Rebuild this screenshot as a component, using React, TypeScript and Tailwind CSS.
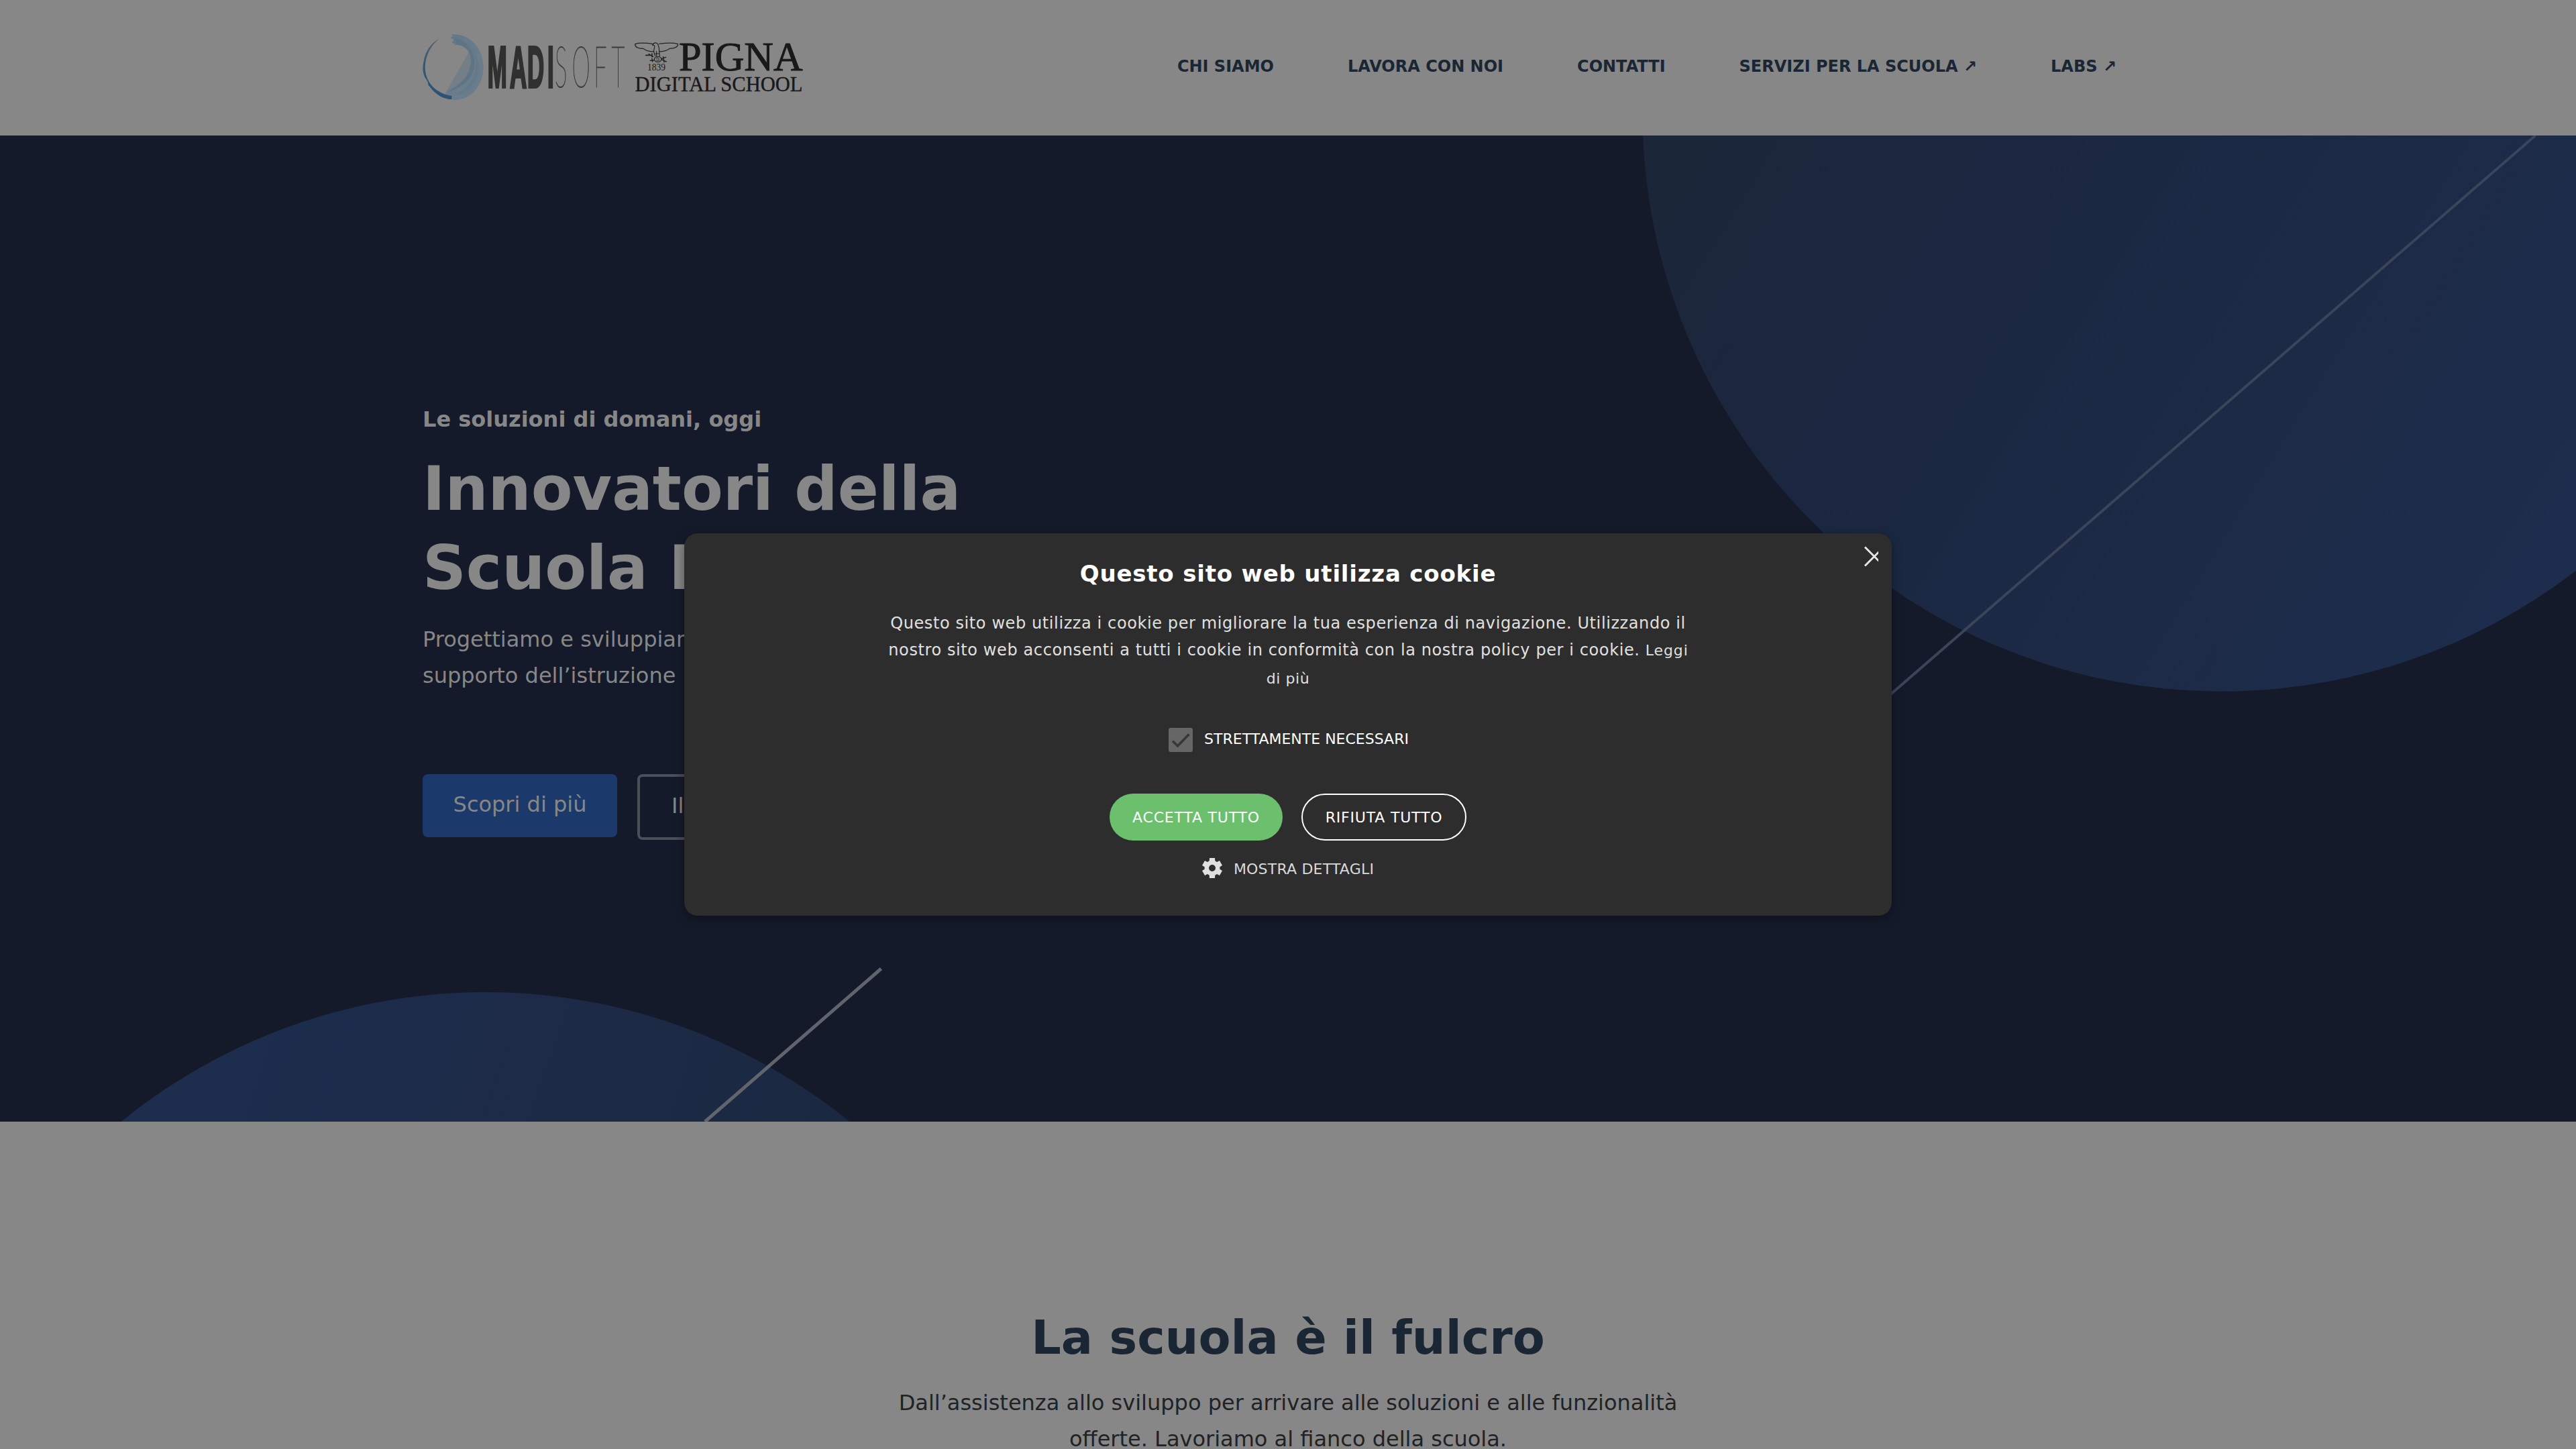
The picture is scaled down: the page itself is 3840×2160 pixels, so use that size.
const NAV = ["CHI SIAMO", "LAVORA CON NOI", "CONTATTI", "SERVIZI PER LA SCUOLA ↗", "LABS ↗"];

function MadisoftMark() {
  return (
    <svg viewBox="0 0 324 390" className="h-[130px] w-[108px] shrink-0">
      <defs>
        <linearGradient id="crescent" x1="0" y1="0" x2="0" y2="1">
          <stop offset="0" stopColor="#566068" />
          <stop offset="0.5" stopColor="#315776" />
          <stop offset="1" stopColor="#2a5375" />
        </linearGradient>
        <linearGradient id="swirl" x1="0" y1="0" x2="1" y2="1">
          <stop offset="0" stopColor="#5e778a" />
          <stop offset="0.6" stopColor="#6c7d8b" />
          <stop offset="1" stopColor="#687c8d" />
        </linearGradient>
      </defs>
      <path d="M158 34 C245 28 302 100 302 180 C302 262 248 328 168 328 L132 300 L240 108 C226 88 200 76 178 82 L160 68 L170 60 L154 48 L166 42 Z" fill="url(#swirl)" />
      <path d="M240 108 L132 296 C150 280 170 270 190 255 C240 220 262 160 240 108 Z" fill="#737e87" />
      <path d="M175 52 C232 60 268 112 262 172 C256 236 205 272 142 292 C200 258 246 214 246 152 C246 110 220 84 182 80 Z" fill="#5f7586" />
      <path d="M230 70 C276 110 290 170 274 220 C256 276 212 302 168 306 C226 284 262 238 268 180 C272 134 254 96 230 70 Z" fill="#65798a" />
      <path d="M105 52 C66 84 42 130 41 180 C41 242 82 296 160 309 L160 325 C118 324 84 298 62 268 L56 262 L52 244 L40 226 C32 206 28 188 34 160 C40 112 66 74 105 52 Z" fill="url(#crescent)" />
    </svg>
  );
}

function MadisoftWord() {
  return (
    <svg viewBox="728 40 210 130" className="h-[130px] w-[210px] shrink-0 overflow-visible">
      <g transform="translate(728 129.6) scale(0.4 1)">
        <text x="-3 80 145 220" fontFamily="Liberation Sans" fontWeight="700" fontSize="87" fill="#303031" stroke="#303031" strokeWidth="4">
          MADI
        </text>
      </g>
      <g transform="translate(827 129.6) scale(0.4 1)">
        <text x="0 64 145 211" fontFamily="Lato" fontWeight="100" fontSize="87" fill="#3a3b3c" stroke="#3a3b3c" strokeWidth="1.1">
          SOFT
        </text>
      </g>
    </svg>
  );
}

function PignaLogo() {
  return (
    <svg viewBox="938 40 262 130" className="h-[130px] w-[262px] shrink-0 overflow-visible">
      <g transform="translate(930 50) scale(0.3333)" fill="none" stroke="#242425" strokeWidth="3.6" strokeLinejoin="round" strokeLinecap="round">
        <path d="M132 47 C100 42 65 42 50 47 C50 58 60 67 86 67 C98 76 115 82 132 80" />
        <path d="M158 46 C190 42 226 42 242 47 C242 58 230 67 206 67 C192 76 176 82 160 80" />
        <path d="M128 52 C132 40 148 38 152 48 C156 58 160 66 158 82 M128 52 L136 53 C142 58 132 68 134 82" />
        <path d="M134 82 L140 100 M158 82 L160 100 M146 80 L146 100 M140 90 L160 90" />
        <ellipse cx="152" cy="115" rx="16" ry="12" />
        <path d="M144 112 L150 108 L158 114 M146 120 L158 119" strokeWidth="3" />
        <path d="M98 97 L118 97 M112 92 L130 103 M126 90 L126 104" strokeWidth="5" />
        <path d="M118 121 L136 119 M126 112 L128 126 M168 112 L188 106 M168 116 L190 126 M176 104 L180 128" strokeWidth="4.4" />
      </g>
      <g fill="#19191a" fontFamily="Liberation Serif">
        <text x="965" y="105.4" fontSize="15" textLength="27" lengthAdjust="spacingAndGlyphs">1839</text>
        <text x="1012" y="104.5" fontSize="60.5" textLength="184.5" lengthAdjust="spacingAndGlyphs" stroke="#19191a" strokeWidth="1">PIGNA</text>
        <text x="946.5" y="136" fontSize="30.5" textLength="250" lengthAdjust="spacingAndGlyphs" stroke="#19191a" strokeWidth="0.4">DIGITAL SCHOOL</text>
      </g>
    </svg>
  );
}

function HeroShapes() {
  return (
    <svg viewBox="0 202 3840 1470" className="absolute inset-0 h-full w-full">
      <defs>
        <linearGradient id="top" gradientUnits="userSpaceOnUse" x1="2450" y1="202" x2="3740" y2="1000">
          <stop offset="0" stopColor="#1b2638" />
          <stop offset="0.3" stopColor="#1b2740" />
          <stop offset="0.65" stopColor="#1c2a46" />
          <stop offset="1" stopColor="#1d2d4d" />
        </linearGradient>
        <linearGradient id="bottom" gradientUnits="userSpaceOnUse" x1="300" y1="1480" x2="1240" y2="1800">
          <stop offset="0" stopColor="#1d2d4e" />
          <stop offset="0.6" stopColor="#1c2a46" />
          <stop offset="1" stopColor="#1b2841" />
        </linearGradient>
      </defs>
      <circle cx="3312" cy="167" r="863.6" fill="url(#top)" />
      <path d="M3779.5 202 L2816 1037" stroke="#3b455a" strokeWidth="4" />
      <circle cx="723.5" cy="2338.5" r="859.5" fill="url(#bottom)" />
      <path d="M1313.5 1444 L1051 1672" stroke="#60646d" strokeWidth="5" />
    </svg>
  );
}

function Gear() {
  return (
    <svg viewBox="-15 -15 30 30" className="size-[30px]" fill="none">
      <circle r="8.2" stroke="#e0e0e0" strokeWidth="6.4" />
      {[0, 60, 120, 180, 240, 300].map((a) => (
        <path key={a} d="M-4 -15 H4 L4.4 -9 H-4.4 Z" fill="#e0e0e0" transform={`rotate(${a})`} />
      ))}
    </svg>
  );
}

function CookieDialog() {
  return (
    <div
      role="dialog"
      className="absolute left-[1020px] top-[795px] flex h-[570px] w-[1800px] flex-col items-center rounded-[20px] bg-[#2d2d2d] pt-9 shadow-[0_4px_16px_rgba(0,0,0,0.4)]"
    >
      <button aria-label="Chiudi" className="absolute right-5 top-[18px] h-8 w-6 overflow-hidden">
        <svg viewBox="0 0 24 32" className="h-8 w-6" stroke="#e6e6e6" strokeWidth="3">
          <path d="M4 2.5 L32 30.5 M4 30.5 L32 2.5" />
        </svg>
      </button>
      <h2 className="text-[34px] font-bold leading-[48px] tracking-[0.8px] text-white">Questo sito web utilizza cookie</h2>
      <div className="mt-[30px] whitespace-nowrap text-center text-2xl leading-[40px] tracking-[0.6px] text-[#e0e0e0]">
        <p className="h-10">Questo sito web utilizza i cookie per migliorare la tua esperienza di navigazione. Utilizzando il</p>
        <p className="h-10 pl-px">
          nostro sito web acconsenti a tutti i cookie in conformità con la nostra policy per i cookie.{" "}
          <a className="text-[22px] tracking-[0.9px]">Leggi</a>
        </p>
        <p className="mt-[3px] h-10 text-[22px]">di più</p>
      </div>
      <label className="mt-[53px] flex h-9 items-center gap-[17px] pl-[2px]">
        <span className="grid size-9 place-items-center rounded-[3px] bg-[#666666]">
          <svg viewBox="0 0 36 36" className="size-9" fill="none" stroke="#373737" strokeWidth="3.6">
            <path d="M6 19.5 L13.5 27 L30.5 9.5" />
          </svg>
        </span>
        <span className="pb-[3px] text-[22px] leading-[30px] text-white">STRETTAMENTE NECESSARI</span>
      </label>
      <div className="mt-[62px] flex h-[70px] gap-7 text-[22px] tracking-[0.8px] text-white">
        <button className="w-[258px] rounded-[35px] bg-[#6bbf6d]">ACCETTA TUTTO</button>
        <button className="w-[246px] rounded-[35px] border-2 border-white">RIFIUTA TUTTO</button>
      </div>
      <div className="mt-[26px] flex h-[30px] items-center gap-[17px]">
        <Gear />
        <span className="pt-[3px] text-[22px] leading-[30px] tracking-[0.2px] text-[#d9d9d9]">MOSTRA DETTAGLI</span>
      </div>
    </div>
  );
}

export default function App() {
  return (
    <div className="relative h-[2160px] w-[3840px] overflow-hidden bg-[#878787] font-['DejaVu_Sans',sans-serif]">
      <header className="flex h-[202px] items-center justify-between pl-[620px] pr-[685px]">
        <div className="mt-2 flex h-[130px]">
          <MadisoftMark />
          <MadisoftWord />
          <PignaLogo />
        </div>
        <nav className="-mt-1 flex gap-[110px] whitespace-nowrap text-2xl font-bold leading-8 text-[#1a2634]">
          {NAV.map((item) => (
            <a key={item}>{item}</a>
          ))}
        </nav>
      </header>

      <section className="relative h-[1470px] bg-[#151a2b] text-[#878787]">
        <HeroShapes />
        <div className="relative mx-auto w-[2580px] pt-[396px]">
          <p className="text-[32px] font-bold leading-[54px]">Le soluzioni di domani, oggi</p>
          <h1 className="mt-[18px] text-[90px] font-bold leading-[118px]">
            Innovatori della
            <br />
            Scuola Italiana
          </h1>
          <p className="mt-5 text-[32px] leading-[54.4px]">
            Progettiamo e sviluppiamo
            <br />
            supporto dell’istruzione
          </p>
          <div className="mt-[119px] flex items-start gap-[30px] text-[32px]">
            <button className="h-[94px] w-[290px] rounded-lg bg-[#1b3a6b] pb-[3px]">Scopri di più</button>
            <button className="h-[98px] w-[290px] rounded-lg border-4 border-[#4b4f5a] pb-[3px] pl-[47px] text-left">
              Il team
            </button>
          </div>
        </div>
      </section>

      <section className="pt-[280px] text-center">
        <h2 className="text-[70px] font-bold leading-[84px] text-[#1a2634]">La scuola è il fulcro</h2>
        <p className="mt-7 text-[32px] leading-[54.4px] text-[#212224]">
          Dall’assistenza allo sviluppo per arrivare alle soluzioni e alle funzionalità
          <br />
          offerte. Lavoriamo al fianco della scuola.
        </p>
      </section>

      <CookieDialog />
    </div>
  );
}
